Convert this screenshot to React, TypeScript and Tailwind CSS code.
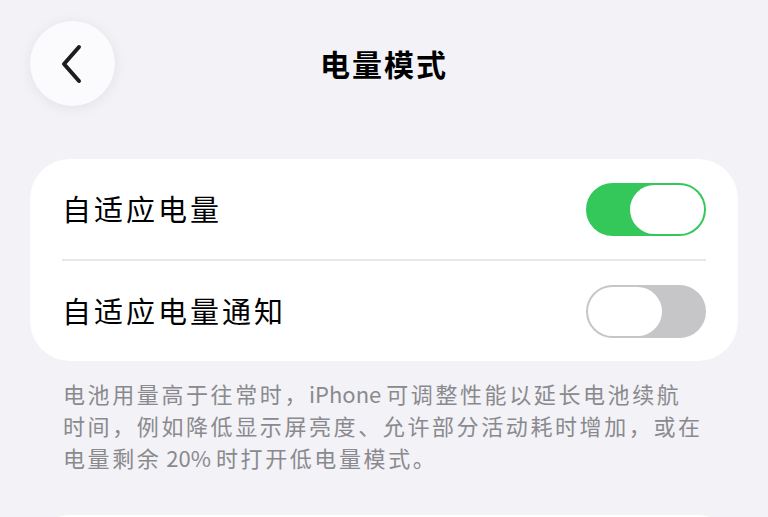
import React, { useState } from "react";

const Toggle: React.FC<{ on: boolean; onChange: () => void }> = ({ on, onChange }) => (
  <button
    type="button"
    onClick={onChange}
    className={`flex h-[53px] w-[120px] shrink-0 items-center rounded-full p-[2px] ${
      on ? "justify-end bg-[#34c759]" : "justify-start bg-[#c6c6c8]"
    }`}
  >
    <span className="block h-[49px] w-[74px] rounded-full bg-white" />
  </button>
);

const App: React.FC = () => {
  const [adaptive, setAdaptive] = useState(true);
  const [notify, setNotify] = useState(false);

  return (
    <div
      className="h-[517px] w-[768px] overflow-hidden bg-[#f2f2f7]"
      style={{ fontFamily: '"Noto Sans CJK SC", "Noto Sans", sans-serif' }}
    >
      {/* header */}
      <div className="grid grid-cols-[85px_1fr_85px] items-center px-[30px] pt-[21px]">
        <button
          type="button"
          className="flex h-[85px] w-[85px] items-center justify-center rounded-full bg-[#fbfbfd] shadow-[0_2px_14px_rgba(0,0,0,0.07)]"
        >
          <svg width="30" height="40" viewBox="0 0 30 40" fill="none">
            <path
              d="M21 3 L6 20 L21 37"
              stroke="#1c1c1e"
              strokeWidth="4"
              strokeLinecap="round"
              strokeLinejoin="round"
            />
          </svg>
        </button>
        <h1 className="text-center text-[30px] font-bold tracking-[2px] text-black">电量模式</h1>
        <div />
      </div>

      {/* settings card */}
      <div className="mx-[30px] mt-[53px] rounded-[40px] bg-white px-[32px]">
        <div className="flex h-[100px] items-center justify-between">
          <span className="text-[29px] tracking-[3px] text-black">自适应电量</span>
          <Toggle on={adaptive} onChange={() => setAdaptive(!adaptive)} />
        </div>
        <div className="h-[2px] bg-[#e8e8ec]" />
        <div className="flex h-[100px] items-center justify-between">
          <span className="text-[29px] tracking-[3px] text-black">自适应电量通知</span>
          <Toggle on={notify} onChange={() => setNotify(!notify)} />
        </div>
      </div>

      <p className="mt-[16px] px-[63px] text-[22px] leading-[32px] tracking-[2.6px] text-[#8a8a8e]">
        <span className="block whitespace-nowrap">
          电池用量高于往常时，<span className="tracking-normal">iPhone </span>可调整性能以延长电池续航
        </span>
        <span className="block whitespace-nowrap">时间，例如降低显示屏亮度、允许部分活动耗时增加，或在</span>
        <span className="block whitespace-nowrap">
          电量剩余<span className="tracking-normal"> 20% </span>时打开低电量模式。
        </span>
      </p>

      <div className="mx-[30px] mt-[42px] h-[80px] rounded-[40px] bg-white" />
    </div>
  );
};

export default App;
